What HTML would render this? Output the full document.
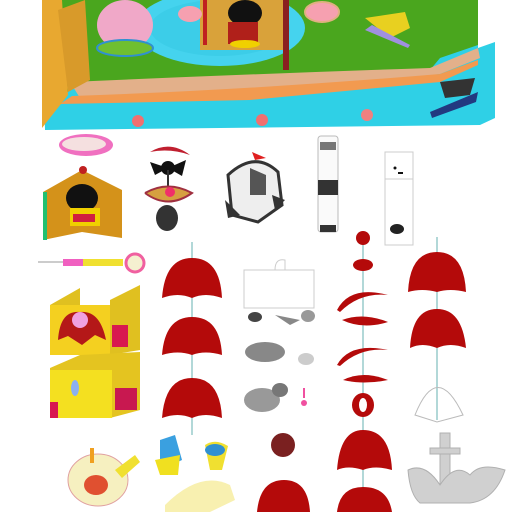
<!DOCTYPE html>
<html><head><style>html,body{margin:0;padding:0;background:#fff}svg{display:block}</style></head>
<body>
<svg width="512" height="512" viewBox="0 0 512 512" xmlns="http://www.w3.org/2000/svg">
<rect width="512" height="512" fill="#fff"/>
<!-- top board -->
<path d="M42 0 H478 V48 L495 42 V118 L480 125 L45 130 Z" fill="#2fd0e6"/>
<path d="M42 0 H478 V45 L440 58 L430 70 L300 76 L80 82 L60 98 L42 100 Z" fill="#4aa61e"/>
<path d="M70 82 Q250 74 430 68 L478 48 L480 58 L440 74 L300 92 L80 98 Z" fill="#e3b08a"/>
<path d="M72 96 Q250 90 440 74 L478 60 L478 65 L440 82 L250 100 L60 104 Z" fill="#f29a50"/>
<path d="M42 0 H62 L68 95 L42 128 Z" fill="#e8a830"/>
<path d="M58 10 L85 0 L90 80 L68 92 Z" fill="#d89a2a"/>
<ellipse cx="220" cy="28" rx="85" ry="38" fill="#45d3ee"/>
<ellipse cx="220" cy="28" rx="70" ry="28" fill="#3ccde8"/>
<rect x="200" y="0" width="85" height="50" fill="#d9a23a"/>
<rect x="203" y="0" width="4" height="45" fill="#c02020"/>
<rect x="283" y="0" width="6" height="70" fill="#8a2020"/>
<ellipse cx="245" cy="13" rx="17" ry="13" fill="#111"/>
<rect x="228" y="22" width="30" height="22" fill="#b0201a"/>
<ellipse cx="245" cy="44" rx="15" ry="4" fill="#f0d000"/>
<ellipse cx="125" cy="25" rx="28" ry="25" fill="#f0a8c8"/>
<ellipse cx="125" cy="48" rx="28" ry="8" fill="#6fbf30" stroke="#3090d0" stroke-width="2"/>
<ellipse cx="190" cy="14" rx="12" ry="8" fill="#f6a0b0"/>
<ellipse cx="322" cy="12" rx="17" ry="10" fill="#f6a0b0" stroke="#e0b080" stroke-width="2"/>
<path d="M365 18 L405 12 L410 28 L390 38 Z" fill="#e8d020"/>
<path d="M372 25 L410 45 L408 48 L365 30 Z" fill="#a090e0"/>
<circle cx="138" cy="121" r="6" fill="#f07070"/>
<circle cx="262" cy="120" r="6" fill="#f07070"/>
<circle cx="367" cy="115" r="6" fill="#f08080"/>
<path d="M440 82 L475 78 L470 95 L445 98 Z" fill="#333"/>
<path d="M430 112 L478 92 L476 102 L432 118 Z" fill="#223a80"/>
<!-- row 2 -->
<ellipse cx="86" cy="145" rx="27" ry="11" fill="#f070c0"/>
<ellipse cx="84" cy="144" rx="22" ry="7" fill="#f5e0e0"/>
<path d="M43 192 L82 170 L122 190 L122 238 L82 232 L43 240 Z" fill="#d4921a"/>
<rect x="43" y="192" width="4" height="48" fill="#20c070"/>
<ellipse cx="82" cy="198" rx="16" ry="14" fill="#111"/>
<rect x="70" y="208" width="30" height="18" fill="#f0d000"/>
<rect x="73" y="214" width="22" height="8" fill="#d02040"/>
<circle cx="83" cy="170" r="4" fill="#c02020"/>
<path d="M150 152 Q170 140 190 155 Q170 148 150 152" fill="#c02030"/>
<circle cx="168" cy="168" r="7" fill="#111"/>
<path d="M150 162 L168 168 L155 175 Z M186 160 L168 168 L182 176 Z" fill="#111"/>
<rect x="167" y="170" width="2" height="20" fill="#333"/>
<path d="M145 193 Q168 180 192 193 Q168 210 145 193" fill="#d6a040" stroke="#a03040" stroke-width="2"/>
<circle cx="170" cy="192" r="5" fill="#f0306a"/>
<ellipse cx="167" cy="218" rx="11" ry="13" fill="#333"/>
<path d="M228 175 Q255 150 278 172 L282 205 L258 222 L232 215 Z" fill="#eee" stroke="#333" stroke-width="3"/>
<path d="M250 168 L266 175 L266 195 L250 195 Z" fill="#555"/>
<path d="M225 200 L240 215 L228 218 Z M272 195 L285 200 L275 210 Z" fill="#333"/>
<path d="M252 152 L266 158 L255 160 Z" fill="#e02020"/>
<rect x="318" y="136" width="20" height="96" rx="3" fill="#fafafa" stroke="#bbb"/>
<rect x="320" y="142" width="16" height="8" fill="#777"/>
<rect x="318" y="180" width="20" height="15" fill="#333"/>
<rect x="320" y="225" width="16" height="7" fill="#333"/>
<rect x="385" y="152" width="28" height="93" fill="#fff" stroke="#ccc"/>
<line x1="385" y1="179" x2="413" y2="179" stroke="#ccc"/>
<ellipse cx="397" cy="229" rx="7" ry="5" fill="#222"/>
<circle cx="395" cy="168" r="1.5" fill="#111"/><rect x="398" y="172" width="5" height="2" fill="#111"/>
<!-- row 3 left -->
<rect x="38" y="261" width="25" height="2" fill="#ccc"/>
<rect x="63" y="259" width="20" height="7" fill="#f060c0"/>
<rect x="83" y="259" width="40" height="7" fill="#f0e030"/>
<circle cx="135" cy="263" r="9" fill="#f5f0d0" stroke="#f060a0" stroke-width="3"/>
<path d="M50 305 L80 288 L80 355 L50 355 Z M110 300 L140 285 L140 350 L110 355 Z" fill="#e0c020"/>
<rect x="50" y="305" width="60" height="50" fill="#f4d020"/>
<path d="M58 340 Q60 310 80 312 Q100 310 106 340 L95 335 L82 345 L68 336 Z" fill="#b41818"/>
<circle cx="80" cy="320" r="8" fill="#f0a0e0"/>
<rect x="112" y="325" width="16" height="22" fill="#d81850"/>
<path d="M50 368 L80 355 L140 352 L140 410 L110 418 L50 418 Z" fill="#e4c420"/>
<rect x="50" y="370" width="62" height="48" fill="#f4e020"/>
<ellipse cx="75" cy="388" rx="4" ry="8" fill="#8ab0f0"/>
<rect x="50" y="402" width="8" height="16" fill="#d81850"/>
<rect x="115" y="388" width="22" height="22" fill="#c81850"/>
<!-- umbrella columns -->
<g stroke="#9cc" stroke-width="1.5"><line x1="192" y1="242" x2="192" y2="435"/><line x1="437" y1="237" x2="437" y2="420"/><line x1="363" y1="232" x2="363" y2="512"/></g>
<g fill="#b40a0a">
<path d="M162 298 Q165 258 192 258 Q220 258 222 298 Q205 292 192 298 Q178 292 162 298Z"/>
<path d="M162 355 Q165 317 192 317 Q220 317 222 355 Q205 350 192 355 Q178 350 162 355Z"/>
<path d="M162 418 Q165 378 192 378 Q220 378 222 418 Q205 412 192 418 Q178 412 162 418Z"/>
<path d="M408 292 Q410 252 437 252 Q464 252 466 292 Q450 288 437 292 Q422 288 408 292Z"/>
<path d="M410 348 Q412 309 437 309 Q462 309 466 348 Q450 342 437 348 Q422 342 410 348Z"/>
<circle cx="363" cy="238" r="7"/>
<ellipse cx="363" cy="265" rx="10" ry="6"/>
<path d="M337 310 Q350 285 388 295 Q360 292 340 312Z"/>
<path d="M342 320 Q363 312 388 322 Q363 330 342 320Z"/>
<path d="M337 365 Q350 342 388 350 Q360 347 340 366Z"/>
<path d="M343 380 Q363 370 388 380 Q363 385 343 380Z"/>
<ellipse cx="363" cy="405" rx="11" ry="12"/>
<path d="M337 470 Q340 430 363 430 Q390 430 392 470 Q375 465 363 470 Q348 465 337 470Z"/>
<path d="M337 512 Q340 487 363 487 Q388 487 392 512Z"/>
<path d="M257 512 Q260 480 284 480 Q308 480 310 512Z"/>
</g>
<ellipse cx="363" cy="405" rx="4" ry="7" fill="#fff"/>
<path d="M415 415 Q437 360 463 415 L437 422 Z" fill="none" stroke="#bbb"/>
<!-- middle column 3 -->
<rect x="244" y="270" width="70" height="38" fill="#fff" stroke="#ccc"/>
<path d="M275 270 Q275 258 285 260 L285 270" fill="none" stroke="#ccc"/>
<ellipse cx="255" cy="317" rx="7" ry="5" fill="#444"/>
<path d="M275 315 L300 320 L290 325 Z" fill="#888"/>
<ellipse cx="308" cy="316" rx="7" ry="6" fill="#999"/>
<ellipse cx="265" cy="352" rx="20" ry="10" fill="#888"/>
<ellipse cx="306" cy="359" rx="8" ry="6" fill="#ccc"/>
<ellipse cx="262" cy="400" rx="18" ry="12" fill="#999"/>
<ellipse cx="280" cy="390" rx="8" ry="7" fill="#777"/>
<rect x="303" y="388" width="2" height="10" fill="#f050a0"/><circle cx="304" cy="403" r="3" fill="#f050a0"/>
<circle cx="283" cy="445" r="12" fill="#7a2020"/>
<!-- anchor -->
<g fill="#d0d0d0" stroke="#b0b0b0">
<rect x="440" y="433" width="10" height="60"/>
<rect x="430" y="448" width="30" height="6"/>
<path d="M408 470 Q425 462 440 485 Q455 462 470 475 Q480 462 505 470 Q495 500 470 503 L420 503 Q410 495 408 470Z"/>
</g>
<!-- bottom left toys -->
<ellipse cx="98" cy="480" rx="30" ry="26" fill="#f6f0c0" stroke="#e0a0a0"/>
<ellipse cx="96" cy="485" rx="12" ry="10" fill="#e05030"/>
<path d="M115 470 L135 455 L140 462 L122 478 Z" fill="#f0e030"/>
<rect x="90" y="448" width="4" height="15" fill="#f0a020"/>
<path d="M160 440 L175 435 L182 460 L160 470 Z" fill="#3aa0e0"/>
<path d="M155 460 L180 455 L178 475 L160 475 Z" fill="#f0e020"/>
<path d="M205 445 Q215 438 228 446 L222 470 L210 470 Z" fill="#f0e030"/>
<ellipse cx="215" cy="450" rx="10" ry="6" fill="#3090d0"/>
<path d="M165 505 Q200 470 230 485 L235 500 L210 512 L165 512 Z" fill="#f8f0b0"/>
</svg>
</body></html>
